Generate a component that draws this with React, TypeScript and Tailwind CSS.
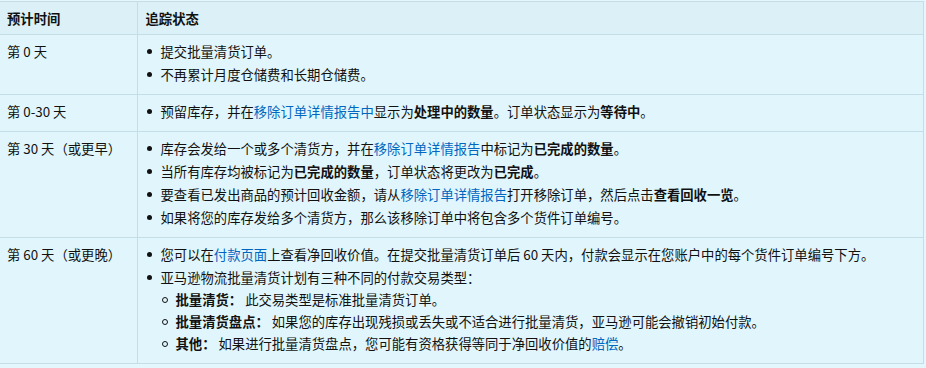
import React from "react";

const font = { fontFamily: '"Noto Sans CJK SC", "Noto Sans", sans-serif' };

function A({ children }: { children: React.ReactNode }) {
  return <span className="text-[#0066c0]">{children}</span>;
}

function B({ children }: { children: React.ReactNode }) {
  return <b className="font-bold">{children}</b>;
}

function Item({ children }: { children: React.ReactNode }) {
  return (
    <li className="flex leading-[23px]">
      <span className="flex w-[15px] shrink-0 items-center pl-[1px]">
        <span className="h-[5px] w-[5px] rounded-full bg-[#111]" />
      </span>
      <span>{children}</span>
    </li>
  );
}

function SubItem({ children }: { children: React.ReactNode }) {
  return (
    <li className="flex pl-[15px] leading-[22px]">
      <span className="flex w-[15px] shrink-0 items-center pl-[1px]">
        <span className="h-[6px] w-[6px] rounded-full border border-[#111]" />
      </span>
      <span>{children}</span>
    </li>
  );
}

const rows: { time: string; items: React.ReactNode }[] = [
  {
    time: "第 0 天",
    items: (
      <>
        <Item>提交批量清货订单。</Item>
        <Item>不再累计月度仓储费和长期仓储费。</Item>
      </>
    ),
  },
  {
    time: "第 0-30 天",
    items: (
      <Item>
        预留库存，并在<A>移除订单详情报告中</A>显示为<B>处理中的数量</B>。订单状态显示为<B>等待中</B>。
      </Item>
    ),
  },
  {
    time: "第 30 天（或更早）",
    items: (
      <>
        <Item>
          库存会发给一个或多个清货方，并在<A>移除订单详情报告</A>中标记为<B>已完成的数量</B>。
        </Item>
        <Item>
          当所有库存均被标记为<B>已完成的数量</B>，订单状态将更改为<B>已完成</B>。
        </Item>
        <Item>
          要查看已发出商品的预计回收金额，请从<A>移除订单详情报告</A>打开移除订单，然后点击<B>查看回收一览</B>。
        </Item>
        <Item>如果将您的库存发给多个清货方，那么该移除订单中将包含多个货件订单编号。</Item>
      </>
    ),
  },
  {
    time: "第 60 天（或更晚）",
    items: (
      <>
        <Item>
          您可以在<A>付款页面</A>上查看净回收价值。在提交批量清货订单后 60 天内，付款会显示在您账户中的每个货件订单编号下方。
        </Item>
        <Item>亚马逊物流批量清货计划有三种不同的付款交易类型：</Item>
        <SubItem>
          <B>批量清货：</B> 此交易类型是标准批量清货订单。
        </SubItem>
        <SubItem>
          <B>批量清货盘点：</B> 如果您的库存出现残损或丢失或不适合进行批量清货，亚马逊可能会撤销初始付款。
        </SubItem>
        <SubItem>
          <B>其他：</B> 如果进行批量清货盘点，您可能有资格获得等同于净回收价值的<A>赔偿</A>。
        </SubItem>
      </>
    ),
  },
];

export default function App() {
  return (
    <div className="h-[368px] w-[926px] overflow-hidden bg-[#e3f7fc] pt-[1px] text-[13.33px] text-[#111]" style={font}>
      <table className="w-[924px] border-collapse">
        <thead>
          <tr className="bg-[#dcf0f7]">
            <th className="w-[137px] border-t border-r border-b border-[#c5dde6] pt-[5px] pb-[4px] pl-[7px] text-left font-bold leading-[23px]">
              预计时间
            </th>
            <th className="border-t border-r border-b border-[#c5dde6] pt-[5px] pb-[4px] pl-[8px] text-left font-bold leading-[23px]">
              追踪状态
            </th>
          </tr>
        </thead>
        <tbody>
          {rows.map((row) => (
            <tr key={row.time} className="bg-[#e0f6fc]">
              <td className="border-r border-b border-[#c5dde6] pt-[5px] pb-[8px] pl-[7px] align-top leading-[23px]">
                {row.time}
              </td>
              <td className="border-r border-b border-[#c5dde6] pt-[5px] pb-[8px] pl-[8px] align-top">
                <ul>{row.items}</ul>
              </td>
            </tr>
          ))}
        </tbody>
      </table>
    </div>
  );
}
